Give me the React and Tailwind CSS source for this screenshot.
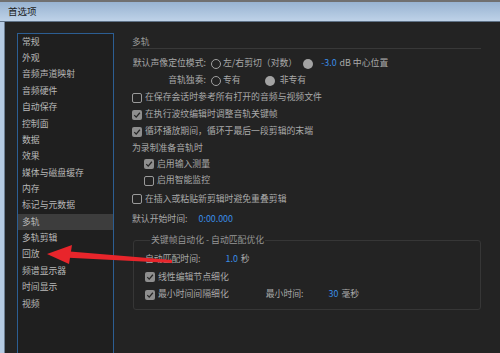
const items = [
  "常规",
  "外观",
  "音频声道映射",
  "音频硬件",
  "自动保存",
  "控制面",
  "数据",
  "效果",
  "媒体与磁盘缓存",
  "内存",
  "标记与元数据",
  "多轨",
  "多轨剪辑",
  "回放",
  "频谱显示器",
  "时间显示",
  "视频",
];

function Radio({ on }) {
  return on ? (
    <span className="block w-[10px] h-[10px] rounded-full bg-[#a3a3a3] shrink-0" />
  ) : (
    <span className="block w-[10px] h-[10px] rounded-full border-[1.5px] border-[#a0a0a0] shrink-0" />
  );
}

function Check({ on, label, className = "" }) {
  return (
    <div className={`flex items-center ${className}`}>
      {on ? (
        <span className="flex items-center justify-center w-[10px] h-[10px] rounded-[2px] bg-[#8e8e8e] shrink-0">
          <svg viewBox="0 0 10 10" className="w-[8px] h-[8px]">
            <path d="M1.6 5.2 L4 7.6 L8.6 2.2" fill="none" stroke="#262626" strokeWidth="1.6" />
          </svg>
        </span>
      ) : (
        <span className="block w-[10px] h-[10px] rounded-[2px] border border-[#9a9a9a] shrink-0" />
      )}
      <span className="ml-[3px]">{label}</span>
    </div>
  );
}

export default function App() {
  return (
    <div
      className="relative w-[500px] h-[353px] overflow-hidden flex flex-col bg-[#232323] text-[8.85px] leading-none"
      style={{ fontFamily: '"Noto Sans CJK SC", "Noto Sans", sans-serif' }}
    >
      {/* title bar */}
      <div className="h-[2px] bg-[#707070]" />
      <div className="h-[20px] flex items-center pl-[8px] bg-gradient-to-b from-[#98b3d1] to-[#bed2e8] border-b border-[#5f7287] text-[#1c1c1c] text-[9.5px]">
        首选项
      </div>

      <div className="flex flex-1 min-h-0">
        <div className="w-[5px] bg-[#b6cbe3] border-r border-[#6d7f93]" />

        <div className="flex flex-1 pl-[12px] pt-[11px] text-[#a9a9a9]">
          {/* category list */}
          <div className="w-[97px] h-[330px] border border-[#2c5e93] bg-[#1f1f1f] text-[#b8b8b8] shrink-0">
            {items.map((t) => (
              <div
                key={t}
                className={`h-[16.36px] flex items-center pl-[4px] ${
                  t === "多轨" ? "bg-[#3d3d3d]" : ""
                }`}
              >
                {t}
              </div>
            ))}
          </div>

          {/* settings */}
          <div className="ml-[17px] w-[350px] pt-[3px]">
            <div className="h-[12px] flex items-center pl-[1px] text-[#9a9a9a]">多轨</div>
            <div className="h-px bg-[#383838]" />

            <div className="mt-[6px] h-[17px] flex items-center">
              <span className="w-[75px] text-right">默认声像定位模式:</span>
              <span className="ml-[5px]">
                <Radio />
              </span>
              <span className="ml-[2px]">左/右剪切（对数）</span>
              <span className="ml-[6px]">
                <Radio on />
              </span>
              <span className="ml-[8px] text-[#3a8ee8]">-3.0</span>
              <span className="ml-[3px]">dB 中心位置</span>
            </div>

            <div className="h-[17px] flex items-center">
              <span className="w-[75px] text-right">音轨独奏:</span>
              <span className="ml-[5px]">
                <Radio />
              </span>
              <span className="ml-[2px]">专有</span>
              <span className="ml-[24px]">
                <Radio on />
              </span>
              <span className="ml-[5px]">非专有</span>
            </div>

            <Check className="h-[17px] pl-[1px]" label="在保存会话时参考所有打开的音频与视频文件" />
            <Check className="h-[17px] pl-[1px]" on label="在执行波纹编辑时调整音轨关键帧" />
            <Check className="h-[17px] pl-[1px]" on label="循环播放期间，循环于最后一段剪辑的末端" />

            <div className="h-[16px] flex items-center pl-[1px]">为录制准备音轨时</div>
            <Check className="h-[16px] pl-[13px]" on label="启用输入测量" />
            <Check className="h-[17px] pl-[13px]" label="启用智能监控" />
            <Check className="h-[20px] pl-[1px]" label="在插入或粘贴新剪辑时避免重叠剪辑" />

            <div className="h-[20px] flex items-center pl-[1px]">
              <span>默认开始时间:</span>
              <span className="ml-[11px] text-[#3a8ee8]">0:00.000</span>
            </div>

            <fieldset className="mt-[5px] ml-[2px] border border-[#363636] rounded-[3px] pl-[11px] pb-[6px]">
              <legend className="ml-[5px] px-[1px] h-[12px] leading-[12px] text-[#969696]">
                关键帧自动化 - 自动匹配优化
              </legend>
              <div className="mt-[4px] h-[18px] flex items-center">
                <span>自动匹配时间:</span>
                <span className="ml-[25px] text-[#3a8ee8]">1.0</span>
                <span className="ml-[3px]">秒</span>
              </div>
              <Check className="h-[18px]" on label="线性编辑节点细化" />
              <div className="h-[17px] flex items-center">
                <Check on label="最小时间间隔细化" />
                <span className="ml-[37px]">最小时间:</span>
                <span className="ml-[25px] text-[#3a8ee8]">30</span>
                <span className="ml-[3px]">毫秒</span>
              </div>
            </fieldset>
          </div>
        </div>
      </div>

      {/* red annotation arrow */}
      <svg
        className="absolute left-0 top-0 pointer-events-none"
        width="500"
        height="353"
        viewBox="0 0 500 353"
      >
        <polygon points="64,251 64,257.5 172,263 172,260" fill="#e8252b" />
        <polygon points="47,254 72,245 69,264" fill="#e8252b" />
      </svg>
    </div>
  );
}
